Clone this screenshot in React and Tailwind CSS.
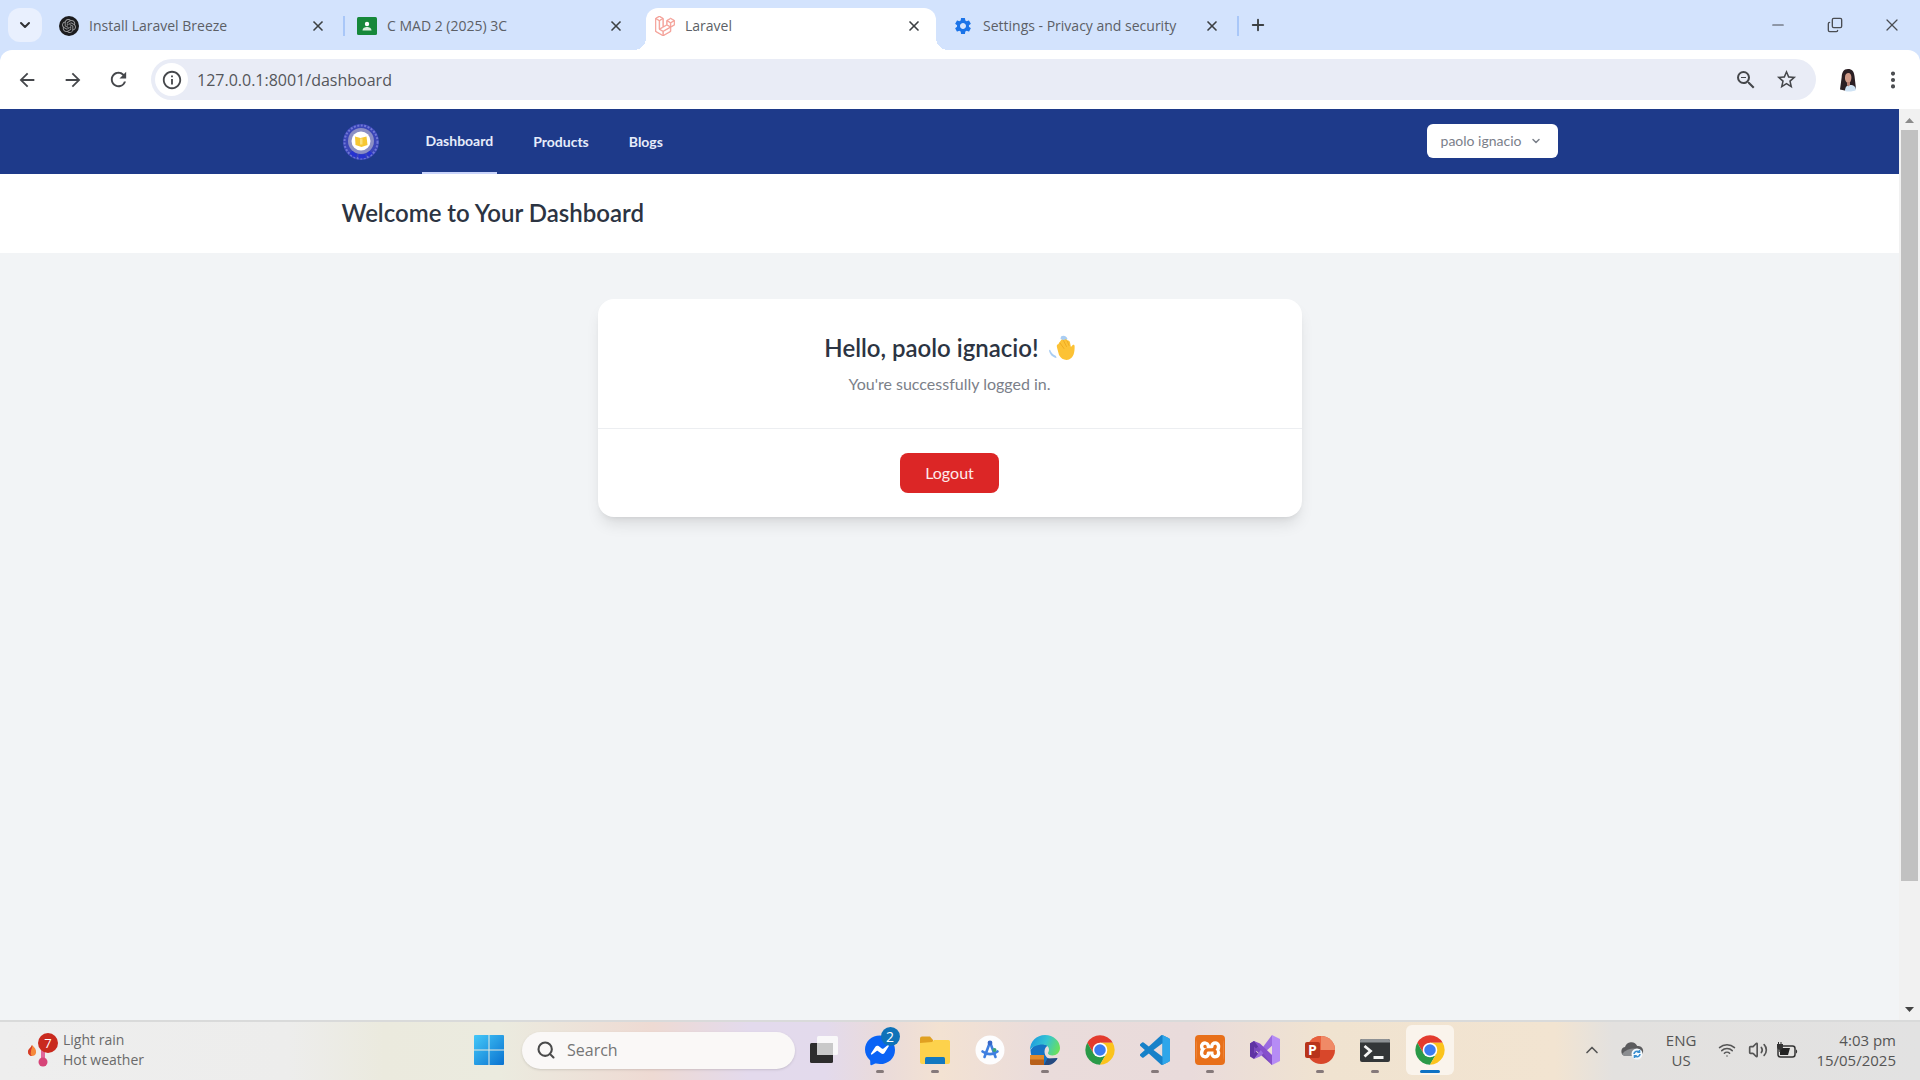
import {
  EllipsisVertical, ChevronDown, ChevronUp, X, Plus, Minus, Copy, Search, Wifi, Volume2,
} from "lucide-react";
import { SiLaravel, SiXampp, SiOpenai } from "react-icons/si";
import {
  MdSettings, MdArrowBack, MdArrowForward, MdRefresh, MdInfoOutline, MdZoomOut, MdStarBorder,
} from "react-icons/md";

const UI = "font-['Open_Sans','Noto_Sans',sans-serif]";
const APP = "font-['Lato','Open_Sans',sans-serif]";

/* ---------- icons ---------- */

function ChromeLogo() {
  return (
    <svg viewBox="0 0 48 48" className="size-8" aria-hidden="true">
      <path fill="#e33b2e" d="M24 13H43.05A22 22 0 0 0 4.95 13L14.47 29.5 24 24Z" />
      <path fill="#2a9a48" d="M14.47 29.5 4.95 13A22 22 0 0 0 24 46L33.53 29.5 24 24Z" />
      <path fill="#fbc31c" d="M33.53 29.5 24 46A22 22 0 0 0 43.05 13H24V24Z" />
      <circle cx="24" cy="24" r="11" fill="#fff" />
      <circle cx="24" cy="24" r="8.6" fill="#3b7cf0" />
    </svg>
  );
}

function MessengerLogo() {
  return (
    <svg viewBox="0 0 32 32" className="size-8" aria-hidden="true">
      <path fill="#0a63f5" d="M16 1.5C7.600 1.500 1 7.600 1 15.600c0 4.200 1.800 7.900 4.800 10.400.3.200.4.600.4 1l.1 3c0 .9.900 1.500 1.700 1.100l3.200-1.500c.3-.1.600-.1.900 0 1.300.3 2.600.5 3.900.5 8.400 0 15-6.100 15-14.200S24.400 1.500 16 1.500Z" />
      <path fill="#fff" d="m7 19.600 4.400-6.900c.7-1.100 2.200-1.400 3.200-.6l3.500 2.600c.3.200.8.200 1.100 0l4.700-3.600c.6-.5 1.400.3 1 .9l-4.400 7c-.7 1.100-2.200 1.300-3.200.6L13.800 17c-.3-.2-.8-.2-1.100 0L8 20.500c-.6.500-1.400-.3-1-.9Z" />
    </svg>
  );
}

function FolderLogo() {
  return (
    <svg viewBox="0 0 32 32" className="size-8" aria-hidden="true">
      <path fill="#e0a021" d="M1 4.500a2 2 0 0 1 2-2h8l3 3.500v6H1Z" />
      <path fill="#fdd24c" d="M1 9 13 8l2-2h14.500A1.500 1.500 0 0 1 31 7.500V28a2 2 0 0 1-2 2H3a2 2 0 0 1-2-2Z" />
      <path fill="#1379c0" d="M6 24.500A1.500 1.500 0 0 1 7.500 23h17a1.500 1.500 0 0 1 1.500 1.500V30H6Z" />
    </svg>
  );
}

function AndroidStudioLogo() {
  return (
    <svg viewBox="0 0 32 32" className="size-8" aria-hidden="true">
      <circle cx="16" cy="16" r="14.500" fill="#fdfdfe" />
      <g fill="none" stroke="#3f7fe0" strokeWidth="2.600" strokeLinecap="round">
        <path d="M15.500 9.500 10.500 23M16.500 9.500l5 13.500" />
        <path d="M8.500 17.500c4.500 3.500 10.500 3.500 15 0" />
      </g>
      <circle cx="16" cy="9" r="2.400" fill="#3566c8" />
      <circle cx="20.500" cy="16" r="2" fill="#3aa57a" />
    </svg>
  );
}

function EdgeLogo() {
  return (
    <svg viewBox="0 0 32 32" className="size-8" aria-hidden="true">
      <defs>
        <linearGradient id="edgeTop" x1="0" x2="1" y1="0.3" y2="0.6">
          <stop offset="0" stopColor="#1c9be0" />
          <stop offset="0.5" stopColor="#35c4d2" />
          <stop offset="1" stopColor="#6be05a" />
        </linearGradient>
      </defs>
      <path fill="#1673c4" d="M1.500 16c0 9 6.500 15 14.500 15 5.500 0 10-2.500 12.500-6.500-6 2.500-13 0-13-7 0-3 1.500-5 3.500-6L8 8Z" />
      <path fill="url(#edgeTop)" d="M1 16C1 7.500 7.500 1 16 1s15 6 15 13c0 4.500-3.500 7.500-7.500 7.500-3 0-4.500-1.200-4.500-2.300 0-.9 1-1.400 1-3.700 0-2.800-2.600-5-6-5C8 10.500 2.500 13 1 16Z" />
      <path fill="#b8601a" d="M1 21h14v10H2.500A1.500 1.500 0 0 1 1 29.500Z" />
      <path fill="#e38a2b" d="M1 21h14v4.500H1Z" />
      <path fill="#254a80" d="m15 31 3.500-6.500 10-.5c-2 4-5.500 7-9 7Z" />
    </svg>
  );
}

function VsCodeLogo() {
  return (
    <svg viewBox="0 0 24 24" className="size-[30px]" aria-hidden="true">
      <path fill="#1681c9" d="M23.150 2.587 18.210.210a1.494 1.494 0 0 0-1.705.290l-9.460 8.630-4.120-3.128a.999.999 0 0 0-1.276.057L.327 7.261A1 1 0 0 0 .326 8.740L3.899 12 .326 15.260a1 1 0 0 0 .001 1.479L1.650 17.940a.999.999 0 0 0 1.276.057l4.120-3.128 9.460 8.630a1.492 1.492 0 0 0 1.704.290l4.942-2.377A1.500 1.500 0 0 0 24 20.060V3.939a1.500 1.500 0 0 0-.850-1.352zM18.004 17.448 10.826 12l7.178-5.448z" />
      <path fill="#2fa6ea" d="M18.004 6.552V.150c.1 0 .150.030.206.060l4.940 2.377A1.500 1.500 0 0 1 24 3.939V20.060a1.500 1.500 0 0 1-.850 1.352l-4.942 2.377-.204.060Z" />
    </svg>
  );
}

function VisualStudioLogo() {
  return (
    <svg viewBox="0 0 32 32" className="size-8" aria-hidden="true">
      <path fill="#7a49bd" d="M1 9.500 5 7l18 16.500V31L2.500 12.500v10L1 22Z" />
      <path fill="#5f33a3" d="M1 9.500 5 7l5 4.500L5.500 16l4.500 4.500L5 25l-4-2.500Z" />
      <path fill="#9b6be0" d="M5 25 23 1l2 9L11 22.500Z" />
      <path fill="#8650cc" d="m5 7 6 2.500L24 22l-1 9Z" />
      <path fill="#b68cf5" d="M23 1l8 4v22l-8 4Z" />
      <path fill="#7a49bd" d="M5 12.500 8.500 16 5 19.500Z" />
    </svg>
  );
}

function PowerPointLogo() {
  return (
    <svg viewBox="0 0 32 32" className="size-8" aria-hidden="true">
      <circle cx="17" cy="16" r="14" fill="#d8472a" />
      <path fill="#f08a66" d="M17 2a14 14 0 0 1 14 14H17Z" />
      <path fill="#e8603c" d="M17 2a14 14 0 0 0-14 14h14Z" />
      <rect x="1" y="8" width="15" height="16" rx="2" fill="#b8341a" />
      <text x="8.500" y="21" textAnchor="middle" fontSize="14" fontWeight="700" fill="#fff" fontFamily="Open Sans">P</text>
    </svg>
  );
}

function TerminalLogo() {
  return (
    <svg viewBox="0 0 32 32" className="size-8" aria-hidden="true">
      <rect x="1" y="5" width="30" height="23" rx="2" fill="#333638" />
      <path fill="#8d9194" d="M1 7a2 2 0 0 1 2-2h26a2 2 0 0 1 2 2v1.500H1Z" />
      <path fill="none" stroke="#f5f5f5" strokeWidth="2.800" d="m5.500 12 6 5-6 5.500M14.500 23.500h10" />
    </svg>
  );
}

function TaskViewLogo() {
  return (
    <svg viewBox="0 0 32 32" className="size-8" aria-hidden="true">
      <rect x="2" y="9" width="23" height="20" rx="1.500" fill="#2d2d2d" />
      <rect x="9" y="2" width="21" height="19" rx="1.500" fill="#fbfbfb" opacity="0.9" />
      <path fill="#c9c9c9" d="M9 9h16v12H9Z" />
    </svg>
  );
}

function WindowsLogo() {
  return (
    <svg viewBox="0 0 30 30" className="size-[30px]" aria-hidden="true">
      <defs>
        <linearGradient id="winBlue" gradientUnits="userSpaceOnUse" x1="0" y1="0" x2="30" y2="30">
          <stop offset="0" stopColor="#44c8f8" />
          <stop offset="1" stopColor="#0a72d0" />
        </linearGradient>
      </defs>
      <path fill="url(#winBlue)" d="M0 1a1 1 0 0 1 1-1h13.500v14.500H0ZM15.500 0H29a1 1 0 0 1 1 1v13.500H15.500ZM0 15.500h14.500V30H1a1 1 0 0 1-1-1ZM15.500 15.500H30V29a1 1 0 0 1-1 1H15.500Z" />
    </svg>
  );
}

function SchoolSeal() {
  return (
    <svg viewBox="0 0 38 38" className="size-[38px]" role="img" aria-label="School seal">
      <circle cx="19" cy="19" r="18" fill="#3b46b8" />
      <circle cx="19" cy="19" r="16.500" fill="none" stroke="#6f78d6" strokeDasharray="2 1.500" strokeWidth="2" />
      <circle cx="19" cy="18" r="13" fill="#8b8fc4" />
      <path d="M9 29c3 3.500 6 4.500 10 4.500S26 32.500 29 29" fill="none" stroke="#2733d0" strokeWidth="4" strokeDasharray="7 2" />
      <circle cx="19" cy="18" r="9.500" fill="#fff" />
      <path fill="#f6c733" d="m13 13.500 5.500 1.500 6-1.500 1 8.500-6 2-6-2Z" />
      <path fill="#fbe07a" d="M18 15.500h2.500v6H18Z" />
    </svg>
  );
}

function WavingHand() {
  return (
    <svg viewBox="0 0 26 26" className="size-[26px]" role="img" aria-label="Waving hand">
      <path fill="#a9cdf3" d="M12 1.500C14.500 0 17.500 1 18.500 4l-2.500 2-4.500-2ZM1 14.500c1 3 2.500 5 6 6.500l.5 2C3.500 22.500.5 19 0 15.500Z" />
      <path fill="#fcc235" d="M8 12.500c-.6-2 .2-3.200 1.200-3.200L12 5.200c.7-1 2-.8 2.500.2l1.300-1c1-.6 2 0 2.300 1l1.200.2c1 .2 1.500 1 1.700 2l.9 4.500 1.800-2c.8-.6 1.800 0 1.900 1 .2 6.500-1 11.500-5.600 13.400-3.700 1.300-8-.5-10-4.500Z" />
      <path fill="none" stroke="#eda820" strokeWidth="0.900" strokeLinecap="round" d="m14.500 5.500 3 6M18 5.500l2 5M11 8l4 5.500" />
    </svg>
  );
}

function ProfilePhoto() {
  return (
    <svg viewBox="0 0 24 24" className="size-6" role="img" aria-label="Profile">
      <path fill="#2b1f24" d="M12 1c-4.500 0-6 3.500-6.300 8L4 21.500l7 1.500 9-2-1.500-13C18 3.500 16 1 12 1Z" />
      <path fill="#cfe3f5" d="M9 23c0-4 2-6 5-6 4 0 6 2 6 5-2 1.500-8 2-11 1Z" />
      <path fill="#d09a88" d="M9 9c.3-3 1.500-4 3.300-4 2.200 0 3.300 2 3.100 5-.2 3-1.400 5-3.200 5S8.700 12.500 9 9Z" />
      <path fill="#b98072" d="M11 14h3v3l-1.500 1.500L11 17Z" />
    </svg>
  );
}

function WeatherIcon() {
  return (
    <svg viewBox="0 0 34 36" className="h-9 w-[34px]" role="img" aria-label="7 alerts">
      <path fill="#f58a3c" d="M5 13c3 2.500 4.500 5 4 8-.4 2-2 3-4 3-2.300 0-4-1.700-4-4 0-3 3-4 4-7Z" />
      <path fill="#d43b2a" d="M1 20c0-3 3-4 4-7 1 2-1 4-1 6s-1 3 1 5c-2.300 0-4-1.700-4-4Z" />
      <rect x="14" y="13" width="4" height="16" rx="2" fill="#e0679b" />
      <circle cx="16" cy="30" r="4.500" fill="#d64478" />
      <circle cx="21" cy="11" r="10" fill="#c92a1e" />
      <text x="21" y="16" textAnchor="middle" fontSize="13" fill="#fff" fontFamily="Open Sans">7</text>
    </svg>
  );
}

function CloudSync() {
  return (
    <svg viewBox="0 0 24 20" className="h-5 w-6" role="img" aria-label="OneDrive">
      <path fill="#5b5b5d" d="M5.500 16A4.500 4.500 0 0 1 5 7.100 6.500 6.500 0 0 1 17.200 6 5 5 0 0 1 19 16Z" />
      <path fill="#8b8d90" d="M2 14c4-5 11-6.500 17-5l3 2c.3 3-1 5-3 5H5.500C4 16 3 15.500 2 14Z" />
      <circle cx="17" cy="14" r="5.500" fill="#f4f9fd" />
      <path fill="none" stroke="#3a8fd0" strokeWidth="1.600" d="M14 14a3 3 0 0 1 5-2m1 2a3 3 0 0 1-5 2M19.500 10v2.300h-2.300M14.500 18v-2.300h2.300" />
    </svg>
  );
}

function BatteryPlugged() {
  return (
    <svg viewBox="0 0 22 18" className="h-[18px] w-[22px]" role="img" aria-label="Battery">
      <rect x="2" y="5" width="17" height="11" rx="2.500" fill="#e4e3e1" stroke="#333" strokeWidth="1.500" />
      <path fill="#222" d="M4 7h10l-2 7H4Z" />
      <path fill="#333" d="M20 8.500c1.500.3 1.500 3.700 0 4ZM1 3h1V1h1v2h1.500V1h1v2H7v3c0 1.500-1 2.500-2.300 2.700V11H3.300V8.700C2 8.500 1 7.500 1 6Z" />
    </svg>
  );
}

/* ---------- browser chrome ---------- */

const tabs = [
  {
    title: "Install Laravel Breeze",
    icon: (
      <span className="flex size-5 items-center justify-center rounded-full bg-[#1c1c1e]">
        <SiOpenai className="size-3.5 text-[#9a9a9c]" />
      </span>
    ),
  },
  {
    title: "C MAD 2 (2025) 3C",
    icon: (
      <svg viewBox="0 0 20 18" className="h-[18px] w-5" aria-hidden="true">
        <rect width="20" height="18" rx="1.500" fill="#16883a" />
        <circle cx="10" cy="7" r="2.200" fill="#fff" />
        <path fill="#d7efdc" d="M5.500 13.500c0-2.500 2.500-3.500 4.500-3.500s4.500 1 4.500 3.500Z" />
      </svg>
    ),
  },
  {
    title: "Laravel",
    active: true,
    icon: <SiLaravel className="size-5 fill-[#f2897f] stroke-[#f5a49c] [stroke-width:0.8]" />,
  },
  { title: "Settings - Privacy and security", icon: <MdSettings className="size-5 text-[#1a73e8]" /> },
];

function Tab({ title, icon, active }) {
  return (
    <div className={active
      ? "relative flex h-[42px] w-[290px] shrink-0 items-center rounded-t-xl bg-white pr-3 pb-1.5 pl-[9px]"
      : "flex h-[42px] w-[290px] shrink-0 items-center pr-3 pb-1.5 pl-[9px]"}>
      {active && (
        <>
          <span className="absolute bottom-0 -left-3 size-3 bg-[radial-gradient(circle_at_0_0,transparent_12px,white_12px)]" />
          <span className="absolute bottom-0 -right-3 size-3 bg-[radial-gradient(circle_at_100%_0,transparent_12px,white_12px)]" />
        </>
      )}
      <span className="flex size-5 shrink-0 items-center justify-center">{icon}</span>
      <span className="ml-2.5 flex-1 truncate text-sm text-[#5c5f66]">{title}</span>
      <button type="button" aria-label={`Close ${title}`} className="flex size-5 items-center justify-center text-[#3c4043]">
        <X className="size-4" strokeWidth={2.5} />
      </button>
    </div>
  );
}

function TabDivider({ hidden }) {
  return (
    <span className="mb-1.5 flex w-2 shrink-0 justify-center">
      {!hidden && <span className="h-5 w-0.5 bg-[#a9c7f8]" />}
    </span>
  );
}

function TabStrip() {
  return (
    <div className="flex h-[50px] items-end bg-[#d3e3fd]">
      <button type="button" aria-label="Search tabs" className="mb-2 ml-2 mr-2 flex size-[34px] shrink-0 items-center justify-center rounded-xl bg-[#e9f0fe] text-[#303134]">
        <ChevronDown className="size-4" strokeWidth={3} />
      </button>
      {tabs.map((tab, i) => (
        <div key={tab.title} className="flex items-center">
          <Tab {...tab} />
          <TabDivider hidden={i === 1 || i === 2} />
        </div>
      ))}
      <button type="button" aria-label="New tab" className="mb-2 flex h-[34px] w-8 items-center justify-center text-[#3c4043]">
        <Plus className="size-[18px]" strokeWidth={2.5} />
      </button>
      <div className="mb-2 ml-auto flex h-[34px] items-center text-[#4a4d52]">
        <button type="button" aria-label="Minimize" className="flex w-14 justify-center"><Minus className="size-[18px]" strokeWidth={1.5} /></button>
        <button type="button" aria-label="Restore" className="flex w-[57px] justify-center"><Copy className="size-4 -scale-x-100 rotate-180" strokeWidth={2} /></button>
        <button type="button" aria-label="Close window" className="flex w-[57px] justify-center"><X className="size-5" strokeWidth={1.5} /></button>
      </div>
    </div>
  );
}

function Toolbar() {
  return (
    <div className="bg-[#d3e3fd]">
      <div className="flex h-[59px] items-center rounded-t-xl bg-white text-[#45474b]">
        <button type="button" aria-label="Back" className="ml-1 flex w-[46px] justify-center"><MdArrowBack className="size-[22px]" /></button>
        <button type="button" aria-label="Forward" className="flex w-[45px] justify-center"><MdArrowForward className="size-[22px]" /></button>
        <button type="button" aria-label="Reload" className="flex w-[46px] justify-center"><MdRefresh className="size-[23px]" /></button>
        <div className="ml-2.5 flex h-[41px] flex-1 items-center rounded-full bg-[#e9ecf6] pl-1 pr-2.5">
          <button type="button" aria-label="Site information" className="flex size-[33px] items-center justify-center rounded-full bg-white">
            <MdInfoOutline className="size-[22px]" />
          </button>
          <input aria-label="Address" defaultValue="127.0.0.1:8001/dashboard" className="ml-[9px] min-w-0 flex-1 bg-transparent text-base text-[#54565b] outline-none" />
          <button type="button" aria-label="Zoom" className="flex w-10 justify-center"><MdZoomOut className="size-6" /></button>
          <button type="button" aria-label="Bookmark" className="flex w-10 justify-center"><MdStarBorder className="size-[23px]" /></button>
        </div>
        <button type="button" aria-label="Profile menu" className="ml-2.5 flex w-11 justify-center"><ProfilePhoto /></button>
        <button type="button" aria-label="Browser menu" className="mr-1 flex w-[46px] justify-center"><EllipsisVertical className="size-[22px]" strokeWidth={2.5} /></button>
      </div>
    </div>
  );
}

/* ---------- page ---------- */

function Navbar() {
  return (
    <nav className="bg-[#1e3a8a]">
      <div className="mx-auto flex h-[65px] max-w-7xl items-center px-8">
        <a href="#home" className="mr-[42px]"><SchoolSeal /></a>
        <div className="flex h-full gap-8 text-sm font-bold text-[#e6ecfa]">
          <a href="#dashboard" className="flex items-center border-b-2 border-[#c9d4fb] px-1">Dashboard</a>
          <a href="#products" className="flex items-center border-b-2 border-transparent px-1 pt-0.5">Products</a>
          <a href="#blogs" className="flex items-center border-b-2 border-transparent px-1 pt-0.5">Blogs</a>
        </div>
        <button type="button" className="mb-0.5 ml-auto flex h-[34px] items-center gap-2 rounded-md bg-white pl-3.5 pr-4 text-sm text-[#7b808a]">
          paolo ignacio
          <ChevronDown className="size-3" strokeWidth={3} />
        </button>
      </div>
    </nav>
  );
}

function Page() {
  return (
    <div className={`${APP} flex min-w-0 flex-1 flex-col bg-[#f2f4f6]`}>
      <Navbar />
      <header className="bg-white">
        <div className="mx-auto max-w-7xl px-8 pt-[23px] pb-6">
          <h1 className="text-2xl leading-8 font-semibold text-[#2c3442]">Welcome to Your Dashboard</h1>
        </div>
      </header>
      <main className="px-8 pt-[46px]">
        <section className="mx-auto max-w-[704px] rounded-2xl bg-white text-center shadow-lg">
          <div className="px-8 pt-[33px] pb-8">
            <h2 className="flex items-center justify-center gap-2.5 text-2xl leading-8 font-semibold text-[#2c3442]">
              Hello, paolo ignacio! <WavingHand />
            </h2>
            <p className="mt-2 text-base leading-6 text-[#7b8089]">You're successfully logged in.</p>
          </div>
          <div className="flex justify-center border-t border-[#eceef1] py-6">
            <button type="button" className="h-10 rounded-lg bg-[#dc2626] px-[25px] text-base text-[#fdeaea]">Logout</button>
          </div>
        </section>
      </main>
    </div>
  );
}

function Scrollbar() {
  return (
    <div className="flex w-[21px] shrink-0 flex-col items-center bg-[#f1f1f1]" aria-hidden="true">
      <svg viewBox="0 0 21 21" className="size-[21px]"><path fill="#8b8b8b" d="m6 14 4.500-5 4.500 5Z" /></svg>
      <div className="w-[17px] flex-[751] bg-[#c1c1c1]" />
      <div className="flex-[118]" />
      <svg viewBox="0 0 21 21" className="size-[21px]"><path fill="#444" d="m6 8 4.500 5L15 8Z" /></svg>
    </div>
  );
}

/* ---------- taskbar ---------- */

const apps = [
  { name: "Messenger", icon: <MessengerLogo />, running: true, badge: "2" },
  { name: "File Explorer", icon: <FolderLogo />, running: true },
  { name: "Android Studio", icon: <AndroidStudioLogo /> },
  { name: "Edge", icon: <EdgeLogo />, running: true },
  { name: "Chrome", icon: <ChromeLogo /> },
  { name: "Visual Studio Code", icon: <VsCodeLogo />, running: true },
  { name: "XAMPP", icon: <span className="flex size-[30px] items-center justify-center rounded bg-[#e8701a]"><span className="flex size-7 rounded-lg bg-white"><SiXampp className="size-7 text-[#e8701a]" /></span></span>, running: true },
  { name: "Visual Studio", icon: <VisualStudioLogo /> },
  { name: "PowerPoint", icon: <PowerPointLogo />, running: true },
  { name: "Terminal", icon: <TerminalLogo />, running: true },
  { name: "Google Chrome", icon: <ChromeLogo />, active: true },
];

function AppButton({ name, icon, running, badge, active }) {
  return (
    <button type="button" aria-label={name} className="flex w-[55px] shrink-0 justify-center">
      <span className={active
        ? "relative flex h-[50px] w-12 items-center justify-center rounded-md bg-[#faf4ec]"
        : "relative flex h-[50px] w-12 items-center justify-center"}>
        {icon}
        {badge && <span className="absolute top-0.5 right-1 flex size-[19px] items-center justify-center rounded-full bg-[#0f72b8] text-sm text-white">{badge}</span>}
        {running && <span className="absolute bottom-0.5 h-[3px] w-2 rounded-full bg-[#85797a]" />}
        {active && <span className="absolute bottom-0.5 h-[3px] w-5 rounded-full bg-[#0f72c4]" />}
      </span>
    </button>
  );
}

function Taskbar() {
  return (
    <footer className="flex h-[60px] items-center border-t-2 border-[#d9dada] bg-[linear-gradient(90deg,#eeeeee_0%,#ededec_15%,#ebeade_20%,#ebebdf_26%,#eedad3_34%,#e3daed_39%,#e3daec_43%,#eadbda_46%,#f3e2d2_49%,#eadcdb_54%,#e9dbdb_62%,#f0e3d0_69%,#f2e4d1_81%,#e3e1df_84%,#e2e2e2_100%)] pb-0.5 text-[15px] leading-5 text-[#6a6a6a]">
      <button type="button" className="ml-[27px] flex flex-1 items-center text-left">
        <WeatherIcon />
        <span className="ml-0.5 text-sm leading-5"><span className="block">Light rain</span><span className="block">Hot weather</span></span>
      </button>
      <div className="ml-2 flex items-center">
        <button type="button" aria-label="Start"><WindowsLogo /></button>
        <label className="ml-[18px] flex h-[37px] w-[273px] items-center rounded-full bg-[#faf8f7] pl-3.5 shadow-sm">
          <Search className="size-5 text-[#4a4a4a]" strokeWidth={2.5} />
          <input type="search" aria-label="Search" placeholder="Search" className="ml-[11px] min-w-0 flex-1 bg-transparent text-base outline-none placeholder:text-[#757575]" />
        </label>
        <button type="button" aria-label="Task view" className="ml-[13px] mr-3 flex w-8 justify-center"><TaskViewLogo /></button>
        {apps.map((app) => <AppButton key={app.name} {...app} />)}
      </div>
      <div className="flex flex-1 items-center justify-end pr-6 text-[#555]">
        <button type="button" aria-label="Hidden icons"><ChevronUp className="size-5" /></button>
        <span className="ml-[18px]"><CloudSync /></span>
        <span className="ml-[22px] text-center"><span className="block">ENG</span><span className="block">US</span></span>
        <Wifi className="ml-[22px] size-[18px]" />
        <Volume2 className="ml-3 size-5" />
        <span className="ml-2"><BatteryPlugged /></span>
        <span className="ml-[18px] text-right"><span className="block">4:03 pm</span><span className="block">15/05/2025</span></span>
      </div>
    </footer>
  );
}

export default function App() {
  return (
    <div className={`${UI} flex min-h-screen flex-col`}>
      <TabStrip />
      <Toolbar />
      <div className="flex flex-1">
        <Page />
        <Scrollbar />
      </div>
      <Taskbar />
    </div>
  );
}
